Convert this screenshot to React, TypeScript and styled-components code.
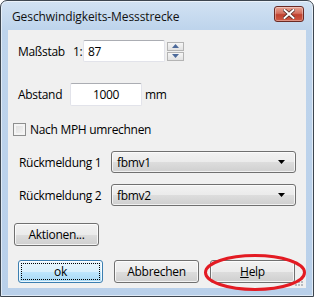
import styled, { createGlobalStyle } from 'styled-components';

const GlobalStyle = createGlobalStyle`
  html, body {
    margin: 0;
    padding: 0;
    background: #ffffff;
  }
  body {
    font-family: "Open Sans", "Noto Sans", sans-serif;
    font-size: 12px;
    letter-spacing: -0.3px;
    color: #000;
  }
`;

const Window = styled.div`
  position: relative;
  width: 314px;
  height: 297px;
  box-sizing: border-box;
  border: 1px solid #3d4650;
  border-radius: 7px 7px 0 0;
  background: linear-gradient(180deg, #d2e2f3 0px, #bed4ec 28px, #b9d0ea 100%);
  box-shadow: inset 0 0 0 1px rgba(255, 255, 255, 0.55);
  display: flex;
  flex-direction: column;
`;

const TitleBar = styled.div`
  height: 29px;
  display: flex;
  align-items: center;
  justify-content: space-between;
  padding: 0 9px 0 11px;
  flex-shrink: 0;
`;

const Title = styled.span`
  font-size: 12px;
  letter-spacing: -0.1px;
  color: #111;
  margin-top: 1px;
`;

const CloseBtn = styled.div`
  width: 30px;
  height: 16px;
  margin-top: -3px;
  box-sizing: border-box;
  border: 1px solid #6a2a24;
  border-radius: 3px;
  background: linear-gradient(180deg, #e8a493 0%, #d4705f 45%, #c0412e 55%, #cf5a44 100%);
  box-shadow: inset 0 0 0 1px rgba(255, 255, 255, 0.35);
  display: flex;
  align-items: center;
  justify-content: center;
`;

const Client = styled.div`
  position: relative;
  margin: 0 7px;
  height: 258px;
  background: #f0f0f0;
  display: flex;
  flex-direction: column;
  padding: 10px 0 0 0;
  box-sizing: border-box;
`;

const Row = styled.div<{ $left: number; $top?: number; $h?: number }>`
  display: flex;
  align-items: center;
  margin-left: ${({ $left }) => $left}px;
  margin-top: ${({ $top }) => $top ?? 0}px;
  height: ${({ $h }) => $h ?? 22}px;
`;

const Label = styled.span<{ $w?: number }>`
  width: ${({ $w }) => ($w ? `${$w}px` : 'auto')};
  flex-shrink: 0;
  white-space: nowrap;
`;

const Unit = styled.span`
  margin-left: 3px;
`;

const TextBox = styled.div<{ $w: number; $h: number; $center?: boolean }>`
  width: ${({ $w }) => $w}px;
  height: ${({ $h }) => $h}px;
  box-sizing: border-box;
  background: #fff;
  border: 1px solid #e2e3ea;
  border-top-color: #abadb3;
  border-radius: 2px;
  display: flex;
  align-items: center;
  justify-content: ${({ $center }) => ($center ? 'center' : 'flex-start')};
  padding: 0 4px;
`;

const Spinner = styled.div`
  display: flex;
  flex-direction: column;
  gap: 1px;
  margin-left: 2px;
`;

const SpinBtn = styled.div`
  width: 17px;
  height: 9px;
  box-sizing: border-box;
  border: 1px solid #b4b4b4;
  background: linear-gradient(180deg, #f6f6f6, #e2e2e2);
  display: flex;
  align-items: center;
  justify-content: center;
`;

const Check = styled.div`
  width: 13px;
  height: 13px;
  box-sizing: border-box;
  border: 1px solid #8e8f8f;
  background: linear-gradient(135deg, #dcdcdc, #f6f6f6);
  box-shadow: inset 0 0 0 2px #f4f4f4;
  margin-right: 4px;
`;

const Combo = styled.div`
  width: 185px;
  height: 22px;
  box-sizing: border-box;
  border: 1px solid #707070;
  border-radius: 3px;
  background: linear-gradient(180deg, #f2f2f2 0%, #ebebeb 50%, #dddddd 51%, #cfcfcf 100%);
  box-shadow: inset 0 0 0 1px rgba(255, 255, 255, 0.7);
  display: flex;
  align-items: center;
  justify-content: space-between;
  padding: 0 9px 0 5px;
`;

const Button = styled.div<{ $default?: boolean }>`
  width: 85px;
  height: 23px;
  box-sizing: border-box;
  border: 1px solid ${({ $default }) => ($default ? '#3c7fb1' : '#707070')};
  border-radius: 3px;
  background: ${({ $default }) =>
    $default
      ? 'linear-gradient(180deg, #eaf6fd 0%, #d9f0fc 50%, #bee6fd 51%, #a7d9f5 100%)'
      : 'linear-gradient(180deg, #f2f2f2 0%, #ebebeb 50%, #dddddd 51%, #cfcfcf 100%)'};
  box-shadow: inset 0 0 0 1px rgba(255, 255, 255, 0.75);
  display: flex;
  align-items: center;
  justify-content: center;
  position: relative;
  flex-shrink: 0;

  ${({ $default }) =>
    $default &&
    `&::after {
      content: '';
      position: absolute;
      inset: 2px;
      border: 1px dotted #000;
    }`}
`;

const ButtonRow = styled.div`
  display: flex;
  gap: 11px;
  margin: 14px 0 0 10px;
`;

const Grip = styled.svg`
  position: absolute;
  right: 3px;
  bottom: 2px;
`;

const Ellipse = styled.svg`
  position: absolute;
  left: 202px;
  top: 252px;
  pointer-events: none;
`;

const Arrow = () => (
  <svg width="8" height="5" viewBox="0 0 8 5">
    <path d="M0 0 H7 L3.5 4 Z" fill="#000" />
  </svg>
);

export default function App() {
  return (
    <>
      <GlobalStyle />
      <Window>
        <TitleBar>
          <Title>Geschwindigkeits-Messstrecke</Title>
          <CloseBtn>
            <svg width="12" height="10" viewBox="0 0 12 10">
              <path d="M1.5 1 L10.5 9 M10.5 1 L1.5 9" stroke="#4a2520" strokeWidth="3.4" strokeLinecap="square" />
              <path d="M1.5 1 L10.5 9 M10.5 1 L1.5 9" stroke="#fff" strokeWidth="2" strokeLinecap="square" />
            </svg>
          </CloseBtn>
        </TitleBar>
        <Client>
          <Row $left={10} $h={22}>
            <Label $w={55}>Maßstab</Label>
            <Label $w={10}>1:</Label>
            <TextBox $w={82} $h={22}>87</TextBox>
            <Spinner>
              <SpinBtn>
                <svg width="7" height="4" viewBox="0 0 7 4">
                  <path d="M0 4 H7 L3.5 0 Z" fill="#4d6a9a" />
                </svg>
              </SpinBtn>
              <SpinBtn>
                <svg width="7" height="4" viewBox="0 0 7 4">
                  <path d="M0 0 H7 L3.5 4 Z" fill="#4d6a9a" />
                </svg>
              </SpinBtn>
            </Spinner>
          </Row>
          <Row $left={10} $top={21} $h={23}>
            <Label $w={52}>Abstand</Label>
            <TextBox $w={72} $h={23} $center>
              1000
            </TextBox>
            <Unit>mm</Unit>
          </Row>
          <Row $left={5} $top={16} $h={15}>
            <Check />
            <Label>Nach MPH umrechnen</Label>
          </Row>
          <Row $left={11} $top={14}>
            <Label $w={92}>Rückmeldung 1</Label>
            <Combo>
              <span>fbmv1</span>
              <Arrow />
            </Combo>
          </Row>
          <Row $left={11} $top={11}>
            <Label $w={92}>Rückmeldung 2</Label>
            <Combo>
              <span>fbmv2</span>
              <Arrow />
            </Combo>
          </Row>
          <Row $left={6} $top={17} $h={23}>
            <Button>Aktionen...</Button>
          </Row>
          <ButtonRow>
            <Button $default>ok</Button>
            <Button>Abbrechen</Button>
            <Button>
              <span>
                <u>H</u>elp
              </span>
            </Button>
          </ButtonRow>
          <Grip width="9" height="9" viewBox="0 0 9 9">
            {[
              [7, 1],
              [7, 4],
              [7, 7],
              [4, 4],
              [4, 7],
              [1, 7],
            ].map(([x, y]) => (
              <rect key={`${x}-${y}`} x={x} y={y} width="2" height="2" fill="#b8bcc2" />
            ))}
          </Grip>
        </Client>
        <Ellipse width="104" height="40" viewBox="0 0 104 40">
          <ellipse cx="52" cy="19.5" rx="49.5" ry="17" fill="none" stroke="#e31b23" strokeWidth="3" />
        </Ellipse>
      </Window>
    </>
  );
}
